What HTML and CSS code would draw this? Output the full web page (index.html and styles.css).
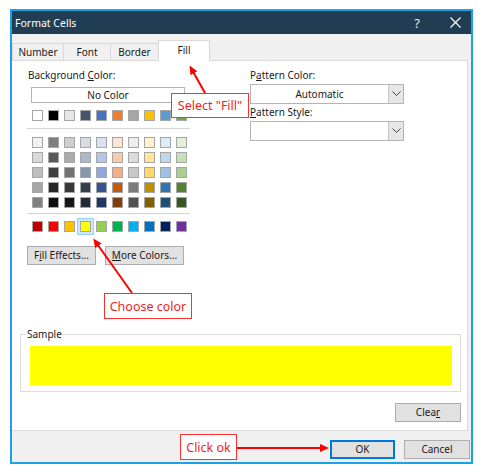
FILE: index.html
```html
<!DOCTYPE html>
<html>
<head>
<meta charset="utf-8">
<link rel="stylesheet" href="styles.css">
</head>
<body>
<div class="dialog">
  <div class="titlebar">
    <span class="title">Format Cells</span>
    <span class="tb-help">?</span>
    <span class="tb-close"><svg width="11" height="11" viewBox="0 0 11 11"><path d="M0.5 0.5 L10.5 10.5 M10.5 0.5 L0.5 10.5" stroke="#ffffff" stroke-width="1.2"/></svg></span>
  </div>
  <div class="body">
    <div class="tabs">
      <div class="tab">Number</div>
      <div class="tab t-font">Font</div>
      <div class="tab t-border">Border</div>
      <div class="tab active">Fill</div>
    </div>
    <div class="panel">
      <div class="top">
        <div class="left">
          <div class="label">Background <u>C</u>olor:</div>
          <div class="btn nocolor">No Color</div>
          <div class="row r-first">
            <i style="background:#ffffff"></i><i style="background:#000000"></i><i style="background:#e7e6e6"></i><i style="background:#44546a"></i><i style="background:#4472c4"></i><i style="background:#ed7d31"></i><i style="background:#a5a5a5"></i><i style="background:#ffc000"></i><i style="background:#5b9bd5"></i><i style="background:#70ad47"></i>
          </div>
          <div class="sep"></div>
          <div class="grid">
            <i style="background:#f2f2f2"></i><i style="background:#7f7f7f"></i><i style="background:#d0cece"></i><i style="background:#d6dce4"></i><i style="background:#d9e1f2"></i><i style="background:#fce4d6"></i><i style="background:#ededed"></i><i style="background:#fff2cc"></i><i style="background:#ddebf7"></i><i style="background:#e2efda"></i>
            <i style="background:#d9d9d9"></i><i style="background:#595959"></i><i style="background:#aeaaaa"></i><i style="background:#acb9ca"></i><i style="background:#b4c6e7"></i><i style="background:#f8cbad"></i><i style="background:#dbdbdb"></i><i style="background:#ffe699"></i><i style="background:#bdd7ee"></i><i style="background:#c6e0b4"></i>
            <i style="background:#bfbfbf"></i><i style="background:#404040"></i><i style="background:#757171"></i><i style="background:#8497b0"></i><i style="background:#8ea9db"></i><i style="background:#f4b084"></i><i style="background:#c9c9c9"></i><i style="background:#ffd966"></i><i style="background:#9bc2e6"></i><i style="background:#a9d08e"></i>
            <i style="background:#a6a6a6"></i><i style="background:#262626"></i><i style="background:#3a3838"></i><i style="background:#333f4f"></i><i style="background:#305496"></i><i style="background:#c65911"></i><i style="background:#7b7b7b"></i><i style="background:#bf8f00"></i><i style="background:#2f75b5"></i><i style="background:#548235"></i>
            <i style="background:#808080"></i><i style="background:#0d0d0d"></i><i style="background:#161616"></i><i style="background:#222b35"></i><i style="background:#203764"></i><i style="background:#833c0c"></i><i style="background:#525252"></i><i style="background:#806000"></i><i style="background:#1f4e78"></i><i style="background:#375623"></i>
          </div>
          <div class="sep sep2"></div>
          <div class="row r-std">
            <i style="background:#c00000"></i><i style="background:#ff0000"></i><i style="background:#ffc000"></i><i class="sel" style="background:#ffff00"></i><i style="background:#92d050"></i><i style="background:#00b050"></i><i style="background:#00b0f0"></i><i style="background:#0070c0"></i><i style="background:#002060"></i><i style="background:#7030a0"></i>
          </div>
          <div class="btnrow">
            <div class="btn b-fill">F<u>i</u>ll Effects...</div>
            <div class="btn b-more"><u>M</u>ore Colors...</div>
          </div>
        </div>
        <div class="right">
          <div class="label">P<u>a</u>ttern Color:</div>
          <div class="combo"><span class="combo-text">Automatic</span><span class="combo-btn"><svg width="9" height="6" viewBox="0 0 9 6"><path d="M0.5 0.5 L4.5 4.5 L8.5 0.5" fill="none" stroke="#444" stroke-width="1"/></svg></span></div>
          <div class="label l2"><u>P</u>attern Style:</div>
          <div class="combo"><span class="combo-text"></span><span class="combo-btn"><svg width="9" height="6" viewBox="0 0 9 6"><path d="M0.5 0.5 L4.5 4.5 L8.5 0.5" fill="none" stroke="#444" stroke-width="1"/></svg></span></div>
        </div>
      </div>
      <fieldset class="sample">
        <legend>Sample</legend>
        <div class="sample-fill"></div>
      </fieldset>
      <div class="clearrow"><div class="btn b-clear">Clea<u>r</u></div></div>
    </div>
    <div class="footer">
      <div class="btn b-ok">OK</div>
      <div class="btn b-cancel">Cancel</div>
    </div>
  </div>
</div>

<div class="callout c-fill">Select "Fill"</div>
<div class="callout c-color">Choose color</div>
<div class="callout c-ok">Click ok</div>
<svg class="arrows" width="483" height="474" viewBox="0 0 483 474">
  <defs>
    <marker id="ah" markerWidth="9" markerHeight="8" refX="6" refY="4" orient="auto" markerUnits="userSpaceOnUse">
      <path d="M0,0 L9,4 L0,8 z" fill="#ff0000"/>
    </marker>
  </defs>
  <line x1="205" y1="93" x2="191" y2="68" stroke="#ff0000" stroke-width="2" marker-end="url(#ah)"/>
  <line x1="132" y1="293" x2="95" y2="241" stroke="#ff0000" stroke-width="2" marker-end="url(#ah)"/>
  <line x1="237" y1="448" x2="326" y2="448" stroke="#ff0000" stroke-width="2" marker-end="url(#ah)"/>
</svg>
</body>
</html>
```

FILE: styles.css
```css
* { box-sizing: border-box; }
html, body { margin: 0; padding: 0; background: #ffffff; }
body {
  font-family: "Noto Sans", "DejaVu Sans", sans-serif;
  font-size: 10px;
  color: #1a1a1a;
  width: 483px;
  height: 474px;
  position: relative;
  overflow: hidden;
}
u { text-decoration: underline; text-underline-offset: 1px; }

.dialog {
  margin: 9px 0 0 10px;
  width: 463px;
  height: 455px;
  border: 2px solid #1ba1e7;
  display: flex;
  flex-direction: column;
  background: #f0f0f0;
}
.titlebar {
  height: 23px;
  background: #213d54;
  color: #ffffff;
  display: flex;
  align-items: center;
  padding-left: 3px;
  font-size: 10.5px;
}
.title { flex: 1; }
.tb-help { width: 14px; text-align: center; font-size: 13px; margin-right: 26px; color: #e8ecef; }
.tb-close { width: 11px; height: 11px; margin-right: 10px; display: flex; }

.body { flex: 1; display: flex; flex-direction: column; }
.tabs {
  display: flex;
  align-items: flex-end;
  height: 26px;
}
.tab {
  height: 17px;
  border: 1px solid #d9d9d9;
  border-bottom: none;
  border-right: none;
  background: #f0f0f0;
  width: 51px;
  text-align: center;
  line-height: 16px;
}
.tab.t-font { width: 47px; }
.tab.t-border { width: 48px; }
.tab.active {
  width: 52px;
  height: 21px;
  background: #ffffff;
  border-right: 1px solid #d9d9d9;
  margin-bottom: -1px;
  line-height: 19px;
  position: relative;
  z-index: 1;
}

.panel {
  height: 371px;
  margin-right: 3px;
  background: #ffffff;
  border: 1px solid #dadada;
  border-left: none;
  display: flex;
  flex-direction: column;
}
.top { display: flex; }
.left { width: 226px; padding-left: 15px; display: flex; flex-direction: column; }
.right { padding-left: 12px; display: flex; flex-direction: column; }

.label { height: 14px; line-height: 14px; margin-top: 7px; margin-left: 1px; white-space: nowrap; }
.right .label { margin-left: 0; }
.right .l2 { margin-top: 1px; }

.btn {
  background: #e1e1e1;
  border: 1px solid #adadad;
  text-align: center;
  white-space: nowrap;
}
.nocolor {
  margin: 5px 0 0 4px;
  width: 154px;
  height: 16px;
  line-height: 14px;
  background: #ffffff;
  border-color: #b4b4b4;
}

.row { display: flex; gap: 5px; margin-left: 5px; }
.row i, .grid i {
  display: block;
  width: 11px;
  height: 11px;
  border: 1px solid #a6a6a6;
}
.r-first { margin-top: 7px; }
.sep { width: 163px; height: 1px; background: #d4d4d4; margin-top: 7px; }
.sep2 { margin-top: 5px; }
.grid {
  display: grid;
  grid-template-columns: repeat(10, 11px);
  column-gap: 5px;
  row-gap: 4px;
  margin: 8px 0 0 5px;
}
.r-std { margin-top: 7px; }
.row i.sel {
  outline: 1px solid #99d1ff;
  outline-offset: 2px;
  box-shadow: 0 0 0 2px #cce8ff;
}

.btnrow { display: flex; gap: 9px; margin-top: 14px; }
.b-fill { width: 69px; height: 19px; line-height: 17px; }
.b-more { width: 79px; height: 19px; line-height: 17px; }

.combo {
  margin-top: 2px;
  width: 154px;
  height: 20px;
  border: 1px solid #b4b4b4;
  display: flex;
  background: #ffffff;
}
.combo-text { flex: 1; text-align: center; line-height: 18px; }
.combo-btn {
  width: 15px;
  border-left: 1px solid #c4c4c4;
  background: #e6e6e6;
  display: flex;
  align-items: center;
  justify-content: center;
}

.sample {
  margin: 62px 0 0 8px;
  width: 441px;
  border: 1px solid #dcdcdc;
  padding: 5px 8px 6px 1px;
}
.sample legend {
  padding: 0 1px;
  margin-left: 4px;
  line-height: 14px;
}
.sample-fill { height: 39px; background: #ffff00; margin-left: 8px; }

.clearrow { display: flex; justify-content: flex-end; padding-right: 6px; margin-top: 11px; }
.b-clear { width: 66px; height: 19px; line-height: 17px; }

.footer {
  flex: 1;
  display: flex;
  justify-content: flex-end;
  align-items: flex-start;
  gap: 9px;
  padding: 9px 1px 0 0;
}
.b-ok {
  width: 65px;
  height: 19px;
  line-height: 15px;
  border: 2px solid #0078d7;
}
.b-cancel { width: 66px; height: 19px; line-height: 17px; }

.callout {
  position: absolute;
  border: 1px solid #ff3030;
  background: #ffffff;
  color: #f01e1e;
  font-size: 12.5px;
  display: flex;
  align-items: center;
  justify-content: center;
  white-space: nowrap;
}
.c-fill { left: 171px; top: 93px; width: 78px; height: 25px; }
.c-color { left: 104px; top: 293px; width: 88px; height: 26px; }
.c-ok { left: 180px; top: 434px; width: 57px; height: 26px; }
.arrows { position: absolute; left: 0; top: 0; pointer-events: none; }
```
